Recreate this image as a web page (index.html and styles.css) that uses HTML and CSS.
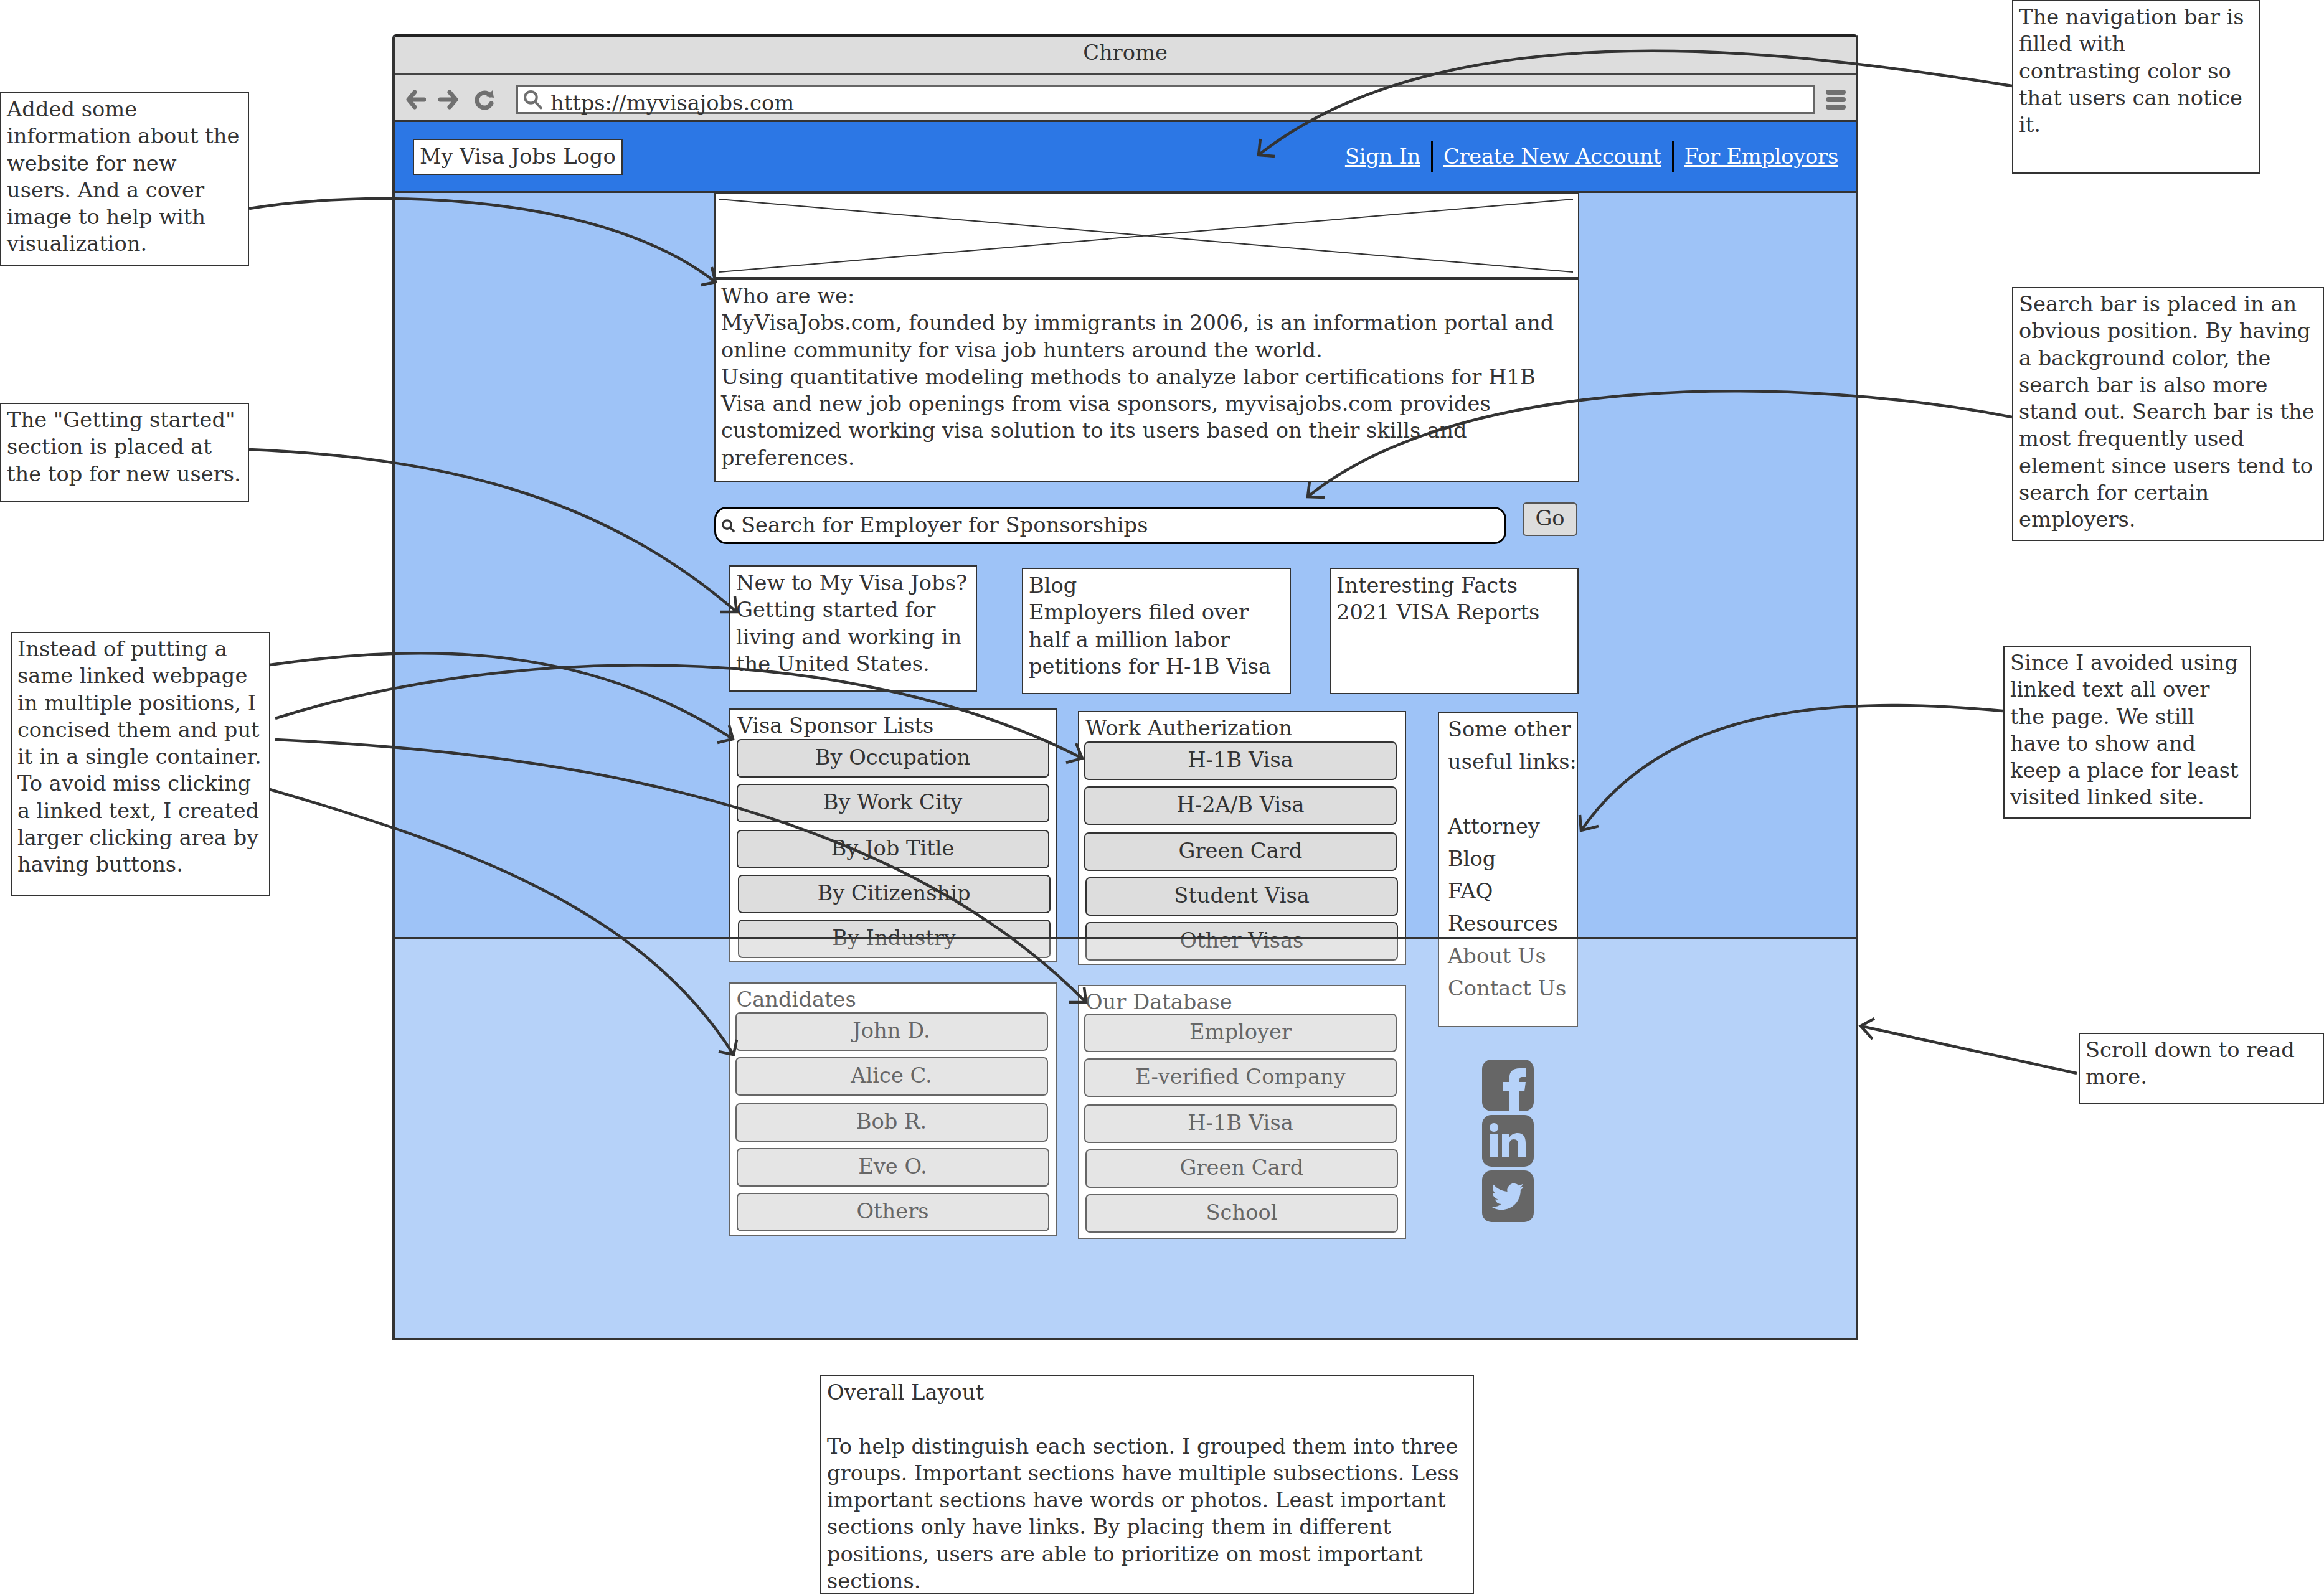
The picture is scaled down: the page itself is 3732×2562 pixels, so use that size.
FILE: index.html
```html
<!DOCTYPE html>
<html lang="en-US">
<head>
    <meta charset="UTF-8">
    <title>My Visa Jobs wireframe</title>
    <link rel="stylesheet" href="styles.css">
</head>
<body>

<div class="browser">
    <div class="titlebar">Chrome</div>
    <div class="toolbar">
        <svg class="tool-icon" viewBox="0 0 32 32"><path d="M14 4 L4 16 L14 28 M5 16 H29"/></svg>
        <svg class="tool-icon tool-forward" viewBox="0 0 32 32"><path d="M18 4 L28 16 L18 28 M27 16 H3"/></svg>
        <svg class="tool-icon tool-reload" viewBox="0 0 32 32"><path d="M25 9 A12 12 0 1 0 27 22"/><path class="tool-solid" d="M18 11 L31 13 L29 1 Z"/></svg>
        <div class="urlbar">
            <svg class="url-search" viewBox="0 0 32 32"><circle cx="12" cy="12" r="9"/><path d="M18 18 L29 30"/></svg>
            <span>https://myvisajobs.com</span>
        </div>
        <div class="menu"><i></i><i></i><i></i></div>
    </div>
    <div class="navbar">
        <div class="logo">My Visa Jobs Logo</div>
        <div class="navlinks">
            <a href="#">Sign In</a>
            <span class="navsep"></span>
            <a href="#">Create New Account</a>
            <span class="navsep"></span>
            <a href="#">For Employors</a>
        </div>
    </div>

    <div class="page">
        <div class="hero">
            <div class="hero-img">
                <svg viewBox="0 0 1384 133" preserveAspectRatio="none"><path d="M6 8 L1376 125 M6 125 L1376 8"/></svg>
            </div>
            <div class="hero-text">
                Who are we:<br>
                MyVisaJobs.com, founded by immigrants in 2006, is an information portal and<br>
                online community for visa job hunters around the world.<br>
                Using quantitative modeling methods to analyze labor certifications for H1B<br>
                Visa and new job openings from visa sponsors, myvisajobs.com provides<br>
                customized working visa solution to its users based on their skills and<br>
                preferences.
            </div>
        </div>

        <div class="searchrow">
            <div class="searchbox">
                <svg class="search-icon" viewBox="0 0 24 24"><circle cx="10" cy="10" r="7"/><path d="M15 15 L22 22"/></svg>
                Search for Employer for Sponsorships
            </div>
            <div class="go">Go</div>
        </div>

        <div class="cards">
            <div class="card card-new">New to My Visa Jobs?<br>Getting started for<br>living and working in<br>the United States.</div>
            <div class="card card-blog">Blog<br>Employers filed over<br>half a million labor<br>petitions for H-1B Visa</div>
            <div class="card card-facts">Interesting Facts<br>2021 VISA Reports</div>
        </div>

        <div class="lists">
            <div class="list-col">
                <div class="list list-sponsor">
                    <div class="list-title">Visa Sponsor Lists</div>
                    <div class="btn">By Occupation</div>
                    <div class="btn">By Work City</div>
                    <div class="btn">By Job Title</div>
                    <div class="btn">By Citizenship</div>
                    <div class="btn">By Industry</div>
                </div>
                <div class="list list-candidates">
                    <div class="list-title">Candidates</div>
                    <div class="btn">John D.</div>
                    <div class="btn">Alice C.</div>
                    <div class="btn">Bob R.</div>
                    <div class="btn">Eve O.</div>
                    <div class="btn">Others</div>
                </div>
            </div>
            <div class="list-col list-col-mid">
                <div class="list list-work">
                    <div class="list-title">Work Autherization</div>
                    <div class="btn">H-1B Visa</div>
                    <div class="btn">H-2A/B Visa</div>
                    <div class="btn">Green Card</div>
                    <div class="btn">Student Visa</div>
                    <div class="btn">Other Visas</div>
                </div>
                <div class="list list-database">
                    <div class="list-title">Our Database</div>
                    <div class="btn">Employer</div>
                    <div class="btn">E-verified Company</div>
                    <div class="btn">H-1B Visa</div>
                    <div class="btn">Green Card</div>
                    <div class="btn">School</div>
                </div>
            </div>
            <div class="list-col list-col-side">
                <div class="usefullinks">
                    Some other<br>useful links:<br><br>Attorney<br>Blog<br>FAQ<br>Resources<br>About Us<br>Contact Us
                </div>
                <div class="social">
                    <svg viewBox="0 0 83 83"><rect width="83" height="83" rx="15"/><path class="social-cut" d="M44 83 V51 H34 V36 H44 V28 C44 19 50 14 60 14 H70 V28 H64 C61 28 60 30 60 32 V36 H70 L68 51 H60 V83 Z"/></svg>
                    <svg viewBox="0 0 83 83"><rect width="83" height="83" rx="15"/><circle class="social-cut" cx="19" cy="20" r="7"/><path class="social-cut" d="M13 30 H25 V68 H13 Z M32 30 H44 V36 C47 31 52 29 57 29 C66 29 70 35 70 45 V68 H58 V47 C58 42 56 39 51 39 C46 39 44 42 44 47 V68 H32 Z"/></svg>
                    <svg viewBox="0 0 83 83"><rect width="83" height="83" rx="15"/><path class="social-cut" transform="translate(15 16) scale(2.17)" d="M23.953 4.57a10 10 0 01-2.825.775 4.958 4.958 0 002.163-2.723c-.951.555-2.005.959-3.127 1.184a4.92 4.92 0 00-8.384 4.482C7.69 8.095 4.067 6.13 1.64 3.162a4.822 4.822 0 00-.666 2.475c0 1.71.87 3.213 2.188 4.096a4.904 4.904 0 01-2.228-.616v.06a4.923 4.923 0 003.946 4.827 4.996 4.996 0 01-2.212.085 4.936 4.936 0 004.604 3.417 9.867 9.867 0 01-6.102 2.105c-.39 0-.779-.023-1.17-.067a13.995 13.995 0 007.557 2.209c9.053 0 13.998-7.496 13.998-13.985 0-.21 0-.42-.015-.63A9.935 9.935 0 0024 4.59z"/></svg>
                </div>
            </div>
        </div>
    </div>

    <!-- everything under the fold is washed out -->
    <div class="fold"></div>
</div>

<div class="note note-cover">Added some<br>information about the<br>website for new<br>users. And a cover<br>image to help with<br>visualization.</div>
<div class="note note-started">The "Getting started"<br>section is placed at<br>the top for new users.</div>
<div class="note note-buttons">Instead of putting a<br>same linked webpage<br>in multiple positions, I<br>concised them and put<br>it in a single container.<br>To avoid miss clicking<br>a linked text, I created<br>larger clicking area by<br>having buttons.</div>
<div class="note note-nav">The navigation bar is<br>filled with<br>contrasting color so<br>that users can notice<br>it.</div>
<div class="note note-search">Search bar is placed in an<br>obvious position. By having<br>a background color, the<br>search bar is also more<br>stand out. Search bar is the<br>most frequently used<br>element since users tend to<br>search for certain<br>employers.</div>
<div class="note note-links">Since I avoided using<br>linked text all over<br>the page. We still<br>have to show and<br>keep a place for least<br>visited linked site.</div>
<div class="note note-scroll">Scroll down to read<br>more.</div>
<div class="note note-layout">Overall Layout<br><br>To help distinguish each section. I grouped them into three<br>groups. Important sections have multiple subsections. Less<br>important sections have words or photos. Least important<br>sections only have links. By placing them in different<br>positions, users are able to prioritize on most important<br>sections.</div>

<svg class="arrows" viewBox="0 0 3732 2562">
    <path d="M400 335 C560 308 950 298 1149 453 M1143 429 L1149 453 L1126 458"/>
    <path d="M400 722 C700 735 960 790 1183 983 M1180 958 L1183 983 L1156 983"/>
    <path d="M433 1068 C700 1030 950 1040 1177 1187 M1171 1165 L1177 1187 L1152 1193"/>
    <path d="M442 1154 C800 1040 1350 1020 1738 1218 M1728 1194 L1738 1218 L1712 1225"/>
    <path d="M442 1188 C800 1205 1400 1260 1744 1610 M1741 1586 L1744 1610 L1717 1610"/>
    <path d="M433 1268 C750 1360 1030 1460 1178 1694 M1183 1670 L1178 1694 L1154 1689"/>
    <path d="M3231 138 C2900 85 2330 5 2021 249 M2024 223 L2021 249 L2047 251"/>
    <path d="M3231 670 C2900 605 2350 595 2100 798 M2103 773 L2100 798 L2127 799"/>
    <path d="M3216 1142 C2950 1118 2680 1130 2539 1334 M2537 1309 L2539 1334 L2567 1327"/>
    <path d="M3335 1724 L2988 1648 M3010 1636 L2988 1648 L3007 1669"/>
</svg>

</body>
</html>
```
FILE: styles.css
```css
html, body {
    margin: 0;
    padding: 0;
    height: 100%;
    overflow: hidden;
}

body {
    position: relative;
    background: white;
    color: #333;
    font-family: "DejaVu Serif", serif;
    font-size: 33.7px;
    line-height: 43.3px;
}

/* the browser frame */
.browser {
    position: absolute;
    left: 630px;
    top: 55px;
    width: 2354px;
    height: 2098px;
    box-sizing: border-box;
    border: 4px solid #333;
    border-top-color: #222;
    border-radius: 6px 6px 0 0;
    background: #9EC3F7;
    display: flex;
    flex-direction: column;
}

.titlebar {
    height: 58px;
    line-height: 52px;
    background: #ddd;
    border-bottom: 3px solid #444;
    text-align: center;
}

.toolbar {
    height: 73px;
    background: #ddd;
    display: flex;
    align-items: center;
    padding: 7px 16px 0 18px;
    box-sizing: border-box;
}

.tool-icon {
    width: 32px;
    height: 32px;
    flex: none;
    fill: none;
    stroke: #707070;
    stroke-width: 7;
    stroke-linecap: round;
    stroke-linejoin: round;
}

.tool-forward {
    margin-left: 20px;
}

.tool-reload {
    margin-left: 26px;
}

.tool-solid {
    fill: #707070;
    stroke: none;
}

.urlbar {
    flex: 1;
    height: 46px;
    margin-left: 35px;
    box-sizing: border-box;
    border: 3px solid #666;
    background: white;
    display: flex;
    align-items: center;
    padding: 11px 0 0 8px;
    gap: 11px;
    line-height: 36px;
}

.url-search {
    width: 33px;
    height: 33px;
    margin-top: -11px;
    fill: none;
    stroke: #707070;
    stroke-width: 4;
}

.menu {
    margin-left: 18px;
    width: 32px;
    display: flex;
    flex-direction: column;
    gap: 4px;
}

.menu i {
    display: block;
    height: 8px;
    border-radius: 4px;
    background: #707070;
}

.navbar {
    height: 117px;
    box-sizing: border-box;
    background: #2C77E5;
    border-top: 3px solid #333;
    border-bottom: 3px solid #333;
    display: flex;
    align-items: center;
    justify-content: space-between;
    padding: 0 28px 0 29px;
}

.logo {
    background: white;
    border: 2px solid #333;
    padding: 6px 9px;
    line-height: 42px;
}

.navlinks {
    display: flex;
    align-items: center;
    gap: 17px;
    letter-spacing: -0.25px;
}

.navlinks a {
    color: white;
    text-decoration: underline;
}

.navsep {
    width: 3px;
    height: 51px;
    background: black;
}

/* page content */
.page {
    padding-left: 513px;
}

.hero {
    width: 1389px;
    box-sizing: border-box;
    border: 2.5px solid #333;
    background: white;
}

.hero-img {
    height: 133px;
    border-bottom: 4px solid #333;
}

.hero-img svg {
    display: block;
    width: 100%;
    height: 100%;
    fill: none;
    stroke: #333;
    stroke-width: 2;
}

.hero-text {
    padding: 5px 9px 15px 9px;
    white-space: nowrap;
}

.searchrow {
    display: flex;
    align-items: flex-start;
    margin-top: 33px;
}

.searchbox {
    width: 1272px;
    height: 60px;
    box-sizing: border-box;
    margin-top: 7px;
    border: 3px solid #000;
    border-radius: 20px;
    background: white;
    display: flex;
    align-items: center;
    gap: 9px;
    padding-left: 8px;
}

.search-icon {
    width: 23px;
    height: 23px;
    fill: none;
    stroke: #333;
    stroke-width: 3.5;
}

.go {
    width: 88px;
    height: 54px;
    box-sizing: border-box;
    margin-left: 26px;
    border: 2.5px solid #555;
    border-radius: 6px;
    background: #ddd;
    text-align: center;
    line-height: 48px;
}

.cards {
    display: flex;
    margin: 34px 0 0 24px;
}

.card {
    height: 203px;
    box-sizing: border-box;
    border: 2.5px solid #333;
    background: white;
    padding: 5px 9px;
    white-space: nowrap;
}

.card-new {
    width: 398px;
}

.card-blog {
    width: 432px;
    margin: 4px 0 0 72px;
}

.card-facts {
    width: 400px;
    margin: 4px 0 0 62px;
}

.lists {
    display: flex;
    margin: 23px 0 0 24px;
}

.list-col {
    display: flex;
    flex-direction: column;
    gap: 32px;
}

.list-col-mid {
    margin: 4px 0 0 33px;
}

.list-col-side {
    margin: 6px 0 0 51px;
    gap: 52px;
}

.list {
    width: 527px;
    height: 408px;
    box-sizing: border-box;
    border: 2.5px solid #333;
    background: white;
    padding: 4px 0 0 8px;
}

.list-sponsor {
    padding-left: 9.5px;
}

.list-candidates {
    padding-left: 7.5px;
}

.list-title {
    height: 43px;
    padding-left: 2px;
    white-space: nowrap;
}

.list-candidates .list-title {
    height: 41.5px;
}

.list-database .list-title {
    height: 40px;
}

.btn {
    width: 502px;
    height: 62px;
    box-sizing: border-box;
    margin-top: 10px;
    border: 2.5px solid #333;
    border-radius: 7px;
    background: #ddd;
    text-align: center;
    line-height: 56px;
}

.list-title + .btn {
    margin-top: 0;
}

.btn:nth-of-type(4) {
    margin-top: 12px;
}

.btn:nth-of-type(5),
.btn:nth-of-type(6) {
    margin-left: 2px;
}

.usefullinks {
    width: 225px;
    height: 506px;
    box-sizing: border-box;
    border: 2.5px solid #333;
    background: white;
    padding-left: 14px;
    line-height: 52px;
    white-space: nowrap;
}

.social {
    display: flex;
    flex-direction: column;
    gap: 6px;
    margin-left: 71px;
}

.social svg {
    display: block;
    width: 83px;
    height: 83px;
    fill: #333;
}

.social .social-cut {
    fill: #9EC3F7;
}

.fold {
    position: absolute;
    left: 0;
    right: 0;
    top: 1446px;
    bottom: 0;
    border-top: 3px solid #333;
    background: rgba(255, 255, 255, 0.25);
}

/* annotations around the frame */
.note {
    position: absolute;
    box-sizing: border-box;
    border: 2.5px solid #333;
    background: white;
    padding: 4px 9px;
    white-space: nowrap;
}

.note-cover {
    left: 0;
    top: 148px;
    width: 400px;
    height: 279px;
}

.note-started {
    left: 0;
    top: 647px;
    width: 400px;
    height: 160px;
}

.note-buttons {
    left: 17px;
    top: 1015px;
    width: 417px;
    height: 424px;
}

.note-nav {
    left: 3231px;
    top: 0;
    width: 398px;
    height: 279px;
}

.note-search {
    left: 3231px;
    top: 461px;
    width: 501px;
    height: 408px;
}

.note-links {
    left: 3217px;
    top: 1037px;
    width: 398px;
    height: 278px;
}

.note-scroll {
    left: 3338px;
    top: 1659px;
    width: 394px;
    height: 114px;
}

.note-layout {
    left: 1317px;
    top: 2209px;
    width: 1050px;
    height: 352px;
}

.arrows {
    position: absolute;
    left: 0;
    top: 0;
    width: 3732px;
    height: 2562px;
    fill: none;
    stroke: #333;
    stroke-width: 4.5;
    pointer-events: none;
}
```
